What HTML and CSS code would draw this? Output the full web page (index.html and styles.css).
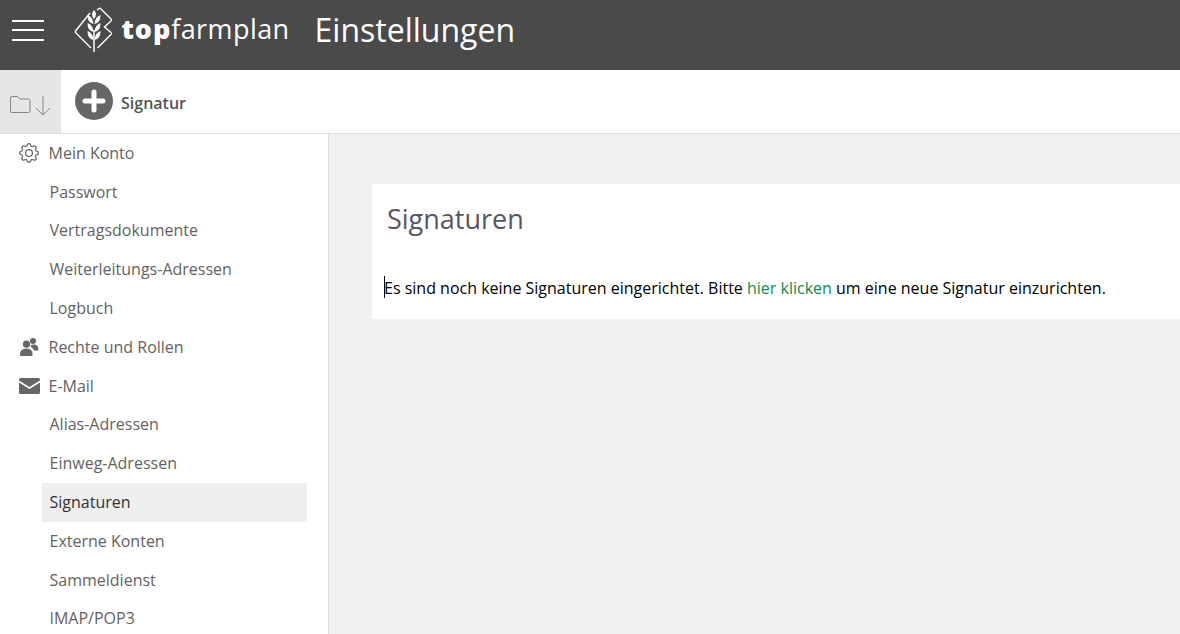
FILE: index.html
```html
<!DOCTYPE html>
<html lang="de">
<head>
<meta charset="utf-8">
<title>Einstellungen</title>
<link rel="stylesheet" href="styles.css">
</head>
<body>
<div class="app">
  <header class="topbar">
    <button class="burger" aria-label="Menü"><span></span><span></span><span></span></button>
    <div class="logo">
      <svg class="logo-mark" width="45" height="56" viewBox="70 0 45 56" fill="none">
        <path d="M90 13 L75.5 31 Q75 32 75.5 32.5 L91 48" stroke="#fff" stroke-width="1.4"/>
        <path d="M97 10 L99 8.5 Q100 8 101 9 L111 19 Q112 20 111 21 L104.5 27 L111 32.5 Q112 33.5 111 34.5 L97.5 48" stroke="#fff" stroke-width="1.4"/>
        <path d="M94 30 V52" stroke="#fff" stroke-width="1.5"/>
        <g fill="#fff">
          <path d="M94 10 Q98 14 94 19 Q90 14 94 10Z"/>
          <path d="M93.5 24 Q87.5 23 87.5 15 Q93 17 93.5 24Z"/>
          <path d="M94.5 24 Q100.5 23 100.5 15 Q95 17 94.5 24Z"/>
          <path d="M93.5 32 Q87.5 31 87.5 23 Q93 25 93.5 32Z"/>
          <path d="M94.5 32 Q100.5 31 100.5 23 Q95 25 94.5 32Z"/>
          <path d="M93.5 40 Q87.5 39 87.5 31 Q93 33 93.5 40Z"/>
          <path d="M94.5 40 Q100.5 39 100.5 31 Q95 33 94.5 40Z"/>
        </g>
      </svg>
      <span class="logo-text"><b>top</b>farmplan</span>
    </div>
    <h1 class="page-title">Einstellungen</h1>
  </header>
  <div class="toolbar">
    <button class="folder-btn" aria-label="Ordner">
      <svg width="41" height="20" viewBox="0 0 41 20" fill="none" stroke="#858585" stroke-width="1">
        <path d="M0.5 15.5 V2 Q0.5 0.5 2 0.5 H7.5 L10 3 H18.5 Q20 3 20 4.5 V15 Q20 16.5 18.5 16.5 H1.5 Q0.5 16.5 0.5 15.5Z"/>
        <path d="M33 0.5 V19 M26 12 L33 19 L40 12"/>
      </svg>
    </button>
    <button class="add-btn">
      <span class="add-icon">
        <svg width="38" height="38" viewBox="0 0 38 38"><circle cx="19" cy="19" r="19" fill="#666"/><path d="M19 10 V28 M10 19 H28" stroke="#fff" stroke-width="5" stroke-linecap="round"/></svg>
      </span>
      <span class="add-label">Signatur</span>
    </button>
  </div>
  <div class="content">
    <nav class="sidebar">
      <a class="item head">
        <svg class="ico" width="20" height="20" viewBox="0 0 16 16" fill="#666"><path d="M8 4.754a3.246 3.246 0 1 0 0 6.492 3.246 3.246 0 0 0 0-6.492zM5.754 8a2.246 2.246 0 1 1 4.492 0 2.246 2.246 0 0 1-4.492 0z"/><path d="M9.796 1.343c-.527-1.79-3.065-1.79-3.592 0l-.094.319a.873.873 0 0 1-1.255.52l-.292-.16c-1.64-.892-3.433.902-2.54 2.541l.159.292a.873.873 0 0 1-.52 1.255l-.319.094c-1.79.527-1.79 3.065 0 3.592l.319.094a.873.873 0 0 1 .52 1.255l-.16.292c-.892 1.64.901 3.434 2.541 2.54l.292-.159a.873.873 0 0 1 1.255.52l.094.319c.527 1.79 3.065 1.79 3.592 0l.094-.319a.873.873 0 0 1 1.255-.52l.292.16c1.64.893 3.434-.902 2.54-2.541l-.159-.292a.873.873 0 0 1 .52-1.255l.319-.094c1.79-.527 1.79-3.065 0-3.592l-.319-.094a.873.873 0 0 1-.52-1.255l.16-.292c.893-1.64-.902-3.433-2.541-2.54l-.292.159a.873.873 0 0 1-1.255-.52l-.094-.319zm-2.633.283c.246-.835 1.428-.835 1.674 0l.094.319a1.873 1.873 0 0 0 2.693 1.115l.291-.16c.764-.415 1.6.42 1.184 1.185l-.159.292a1.873 1.873 0 0 0 1.116 2.692l.318.094c.835.246.835 1.428 0 1.674l-.319.094a1.873 1.873 0 0 0-1.115 2.693l.16.291c.415.764-.42 1.6-1.185 1.184l-.291-.159a1.873 1.873 0 0 0-2.693 1.116l-.094.318c-.246.835-1.428.835-1.674 0l-.094-.319a1.873 1.873 0 0 0-2.692-1.115l-.292.16c-.764.415-1.6-.42-1.184-1.185l.159-.291A1.873 1.873 0 0 0 1.945 8.93l-.319-.094c-.835-.246-.835-1.428 0-1.674l.319-.094A1.873 1.873 0 0 0 3.06 4.377l-.16-.292c-.415-.764.42-1.6 1.185-1.184l.292.159a1.873 1.873 0 0 0 2.692-1.115l.094-.319z"/></svg>
        Mein Konto
      </a>
      <a class="item">Passwort</a>
      <a class="item">Vertragsdokumente</a>
      <a class="item">Weiterleitungs-Adressen</a>
      <a class="item">Logbuch</a>
      <a class="item head">
        <svg class="ico" width="20" height="20" viewBox="0 0 20 20" fill="#666"><circle cx="7.5" cy="7.2" r="3.6"/><circle cx="14" cy="4" r="3"/><path d="M1 18 Q.6 11.5 7.5 11.5 Q14 11.5 13.6 18 Q13.5 19 12.5 19 H2 Q1 19 1 18Z"/><path d="M12 8 Q17 6.5 18.8 9.5 Q19.8 11.5 19 13.5 H15 Q14.5 11 12 10 Z"/></svg>
        Rechte und Rollen
      </a>
      <a class="item head">
        <svg class="ico" width="21" height="16" viewBox="0 0 21 16" fill="#666"><path d="M1.5 0 H19.5 Q21 0 21 1.5 V2.5 L10.5 9 L0 2.5 V1.5 Q0 0 1.5 0Z"/><path d="M0 4.6 L10.5 11 L21 4.6 V14.5 Q21 16 19.5 16 H1.5 Q0 16 0 14.5Z"/></svg>
        E-Mail
      </a>
      <a class="item">Alias-Adressen</a>
      <a class="item">Einweg-Adressen</a>
      <a class="item active">Signaturen</a>
      <a class="item">Externe Konten</a>
      <a class="item">Sammeldienst</a>
      <a class="item">IMAP/POP3</a>
    </nav>
    <main class="main">
      <section class="card">
        <h2 class="card-title">Signaturen</h2>
        <p class="card-text"><span class="caret"></span>Es sind noch keine Signaturen eingerichtet. Bitte <a class="link">hier klicken</a> um eine neue Signatur einzurichten.</p>
      </section>
    </main>
  </div>
</div>
</body>
</html>
```
FILE: styles.css
```css
* { box-sizing: border-box; }
html, body { margin: 0; height: 100%; overflow: hidden; }
body { font-family: "Open Sans", sans-serif; font-size: 16px; color: #000; background: #fff; }
.app { display: flex; flex-direction: column; height: 634px; }
button { border: 0; background: none; padding: 0; font: inherit; }

.topbar { height: 70px; flex: none; background: #4a4a4a; display: flex; align-items: center; color: #fff; padding-bottom: 10px; }
.burger { width: 32px; margin-left: 12px; display: flex; flex-direction: column; gap: 7.5px; }
.burger span { display: block; height: 2px; background: #fff; }
.logo { display: flex; align-items: center; margin-left: 26px; }
.logo-mark { display: block; flex: none; margin-top: -4px; }
.logo-text { font-family: "Open Sans", sans-serif; font-size: 27px; letter-spacing: .42px; margin-left: 6.5px; margin-top: -3px; }
.logo-text b { font-weight: 800; letter-spacing: .9px; }
.page-title { margin: 0 0 0 25px; font-size: 32px; font-weight: 400; line-height: 1; }

.toolbar { height: 64px; flex: none; display: flex; align-items: stretch; border-bottom: 1px solid #e0e0e0; }
.folder-btn { width: 60.5px; background: #e6e6e6; display: flex; align-items: center; justify-content: center; padding-top: 8px; }
.add-btn { display: flex; align-items: center; margin-left: 14px; gap: 8.5px; }
.add-icon { display: block; height: 38px; margin-top: -2px; }
.add-icon svg { display: block; }
.add-label { font-weight: 600; color: #555; font-size: 16px; margin-top: 3px; }

.content { flex: 1; display: flex; min-height: 0; }
.sidebar { width: 329px; flex: none; border-right: 1px solid #dcdcdc; padding: 0 21px 0 42px; background: #fff; overflow: hidden; }
.item { display: flex; align-items: center; height: 38.8px; padding-left: 7.5px; color: #665f5f; white-space: nowrap; position: relative; top: -0.6px; }
.item.head { margin-left: -23px; padding-left: 29.5px; }
.ico { position: absolute; left: 0; top: 50%; transform: translateY(-50%); }
.item.active { background: #eee; color: #333; height: 39.2px; margin-bottom: -0.4px; }

.main { flex: 1; background: #f1f1f1; padding: 50px 0 0 43px; min-width: 0; }
.card { background: #fff; height: 135px; padding: 15px 15px 0 15px; }
.card-title { margin: 0; font-size: 27px; font-weight: 400; color: #5a5560; line-height: 40px; }
.card-text { margin: 37px 0 0 -3px; line-height: 24px; white-space: nowrap; position: relative; }
.caret { position: absolute; left: 0; top: 0; width: 1px; height: 22px; background: #000; }
.link { color: #128a4f; }
```
